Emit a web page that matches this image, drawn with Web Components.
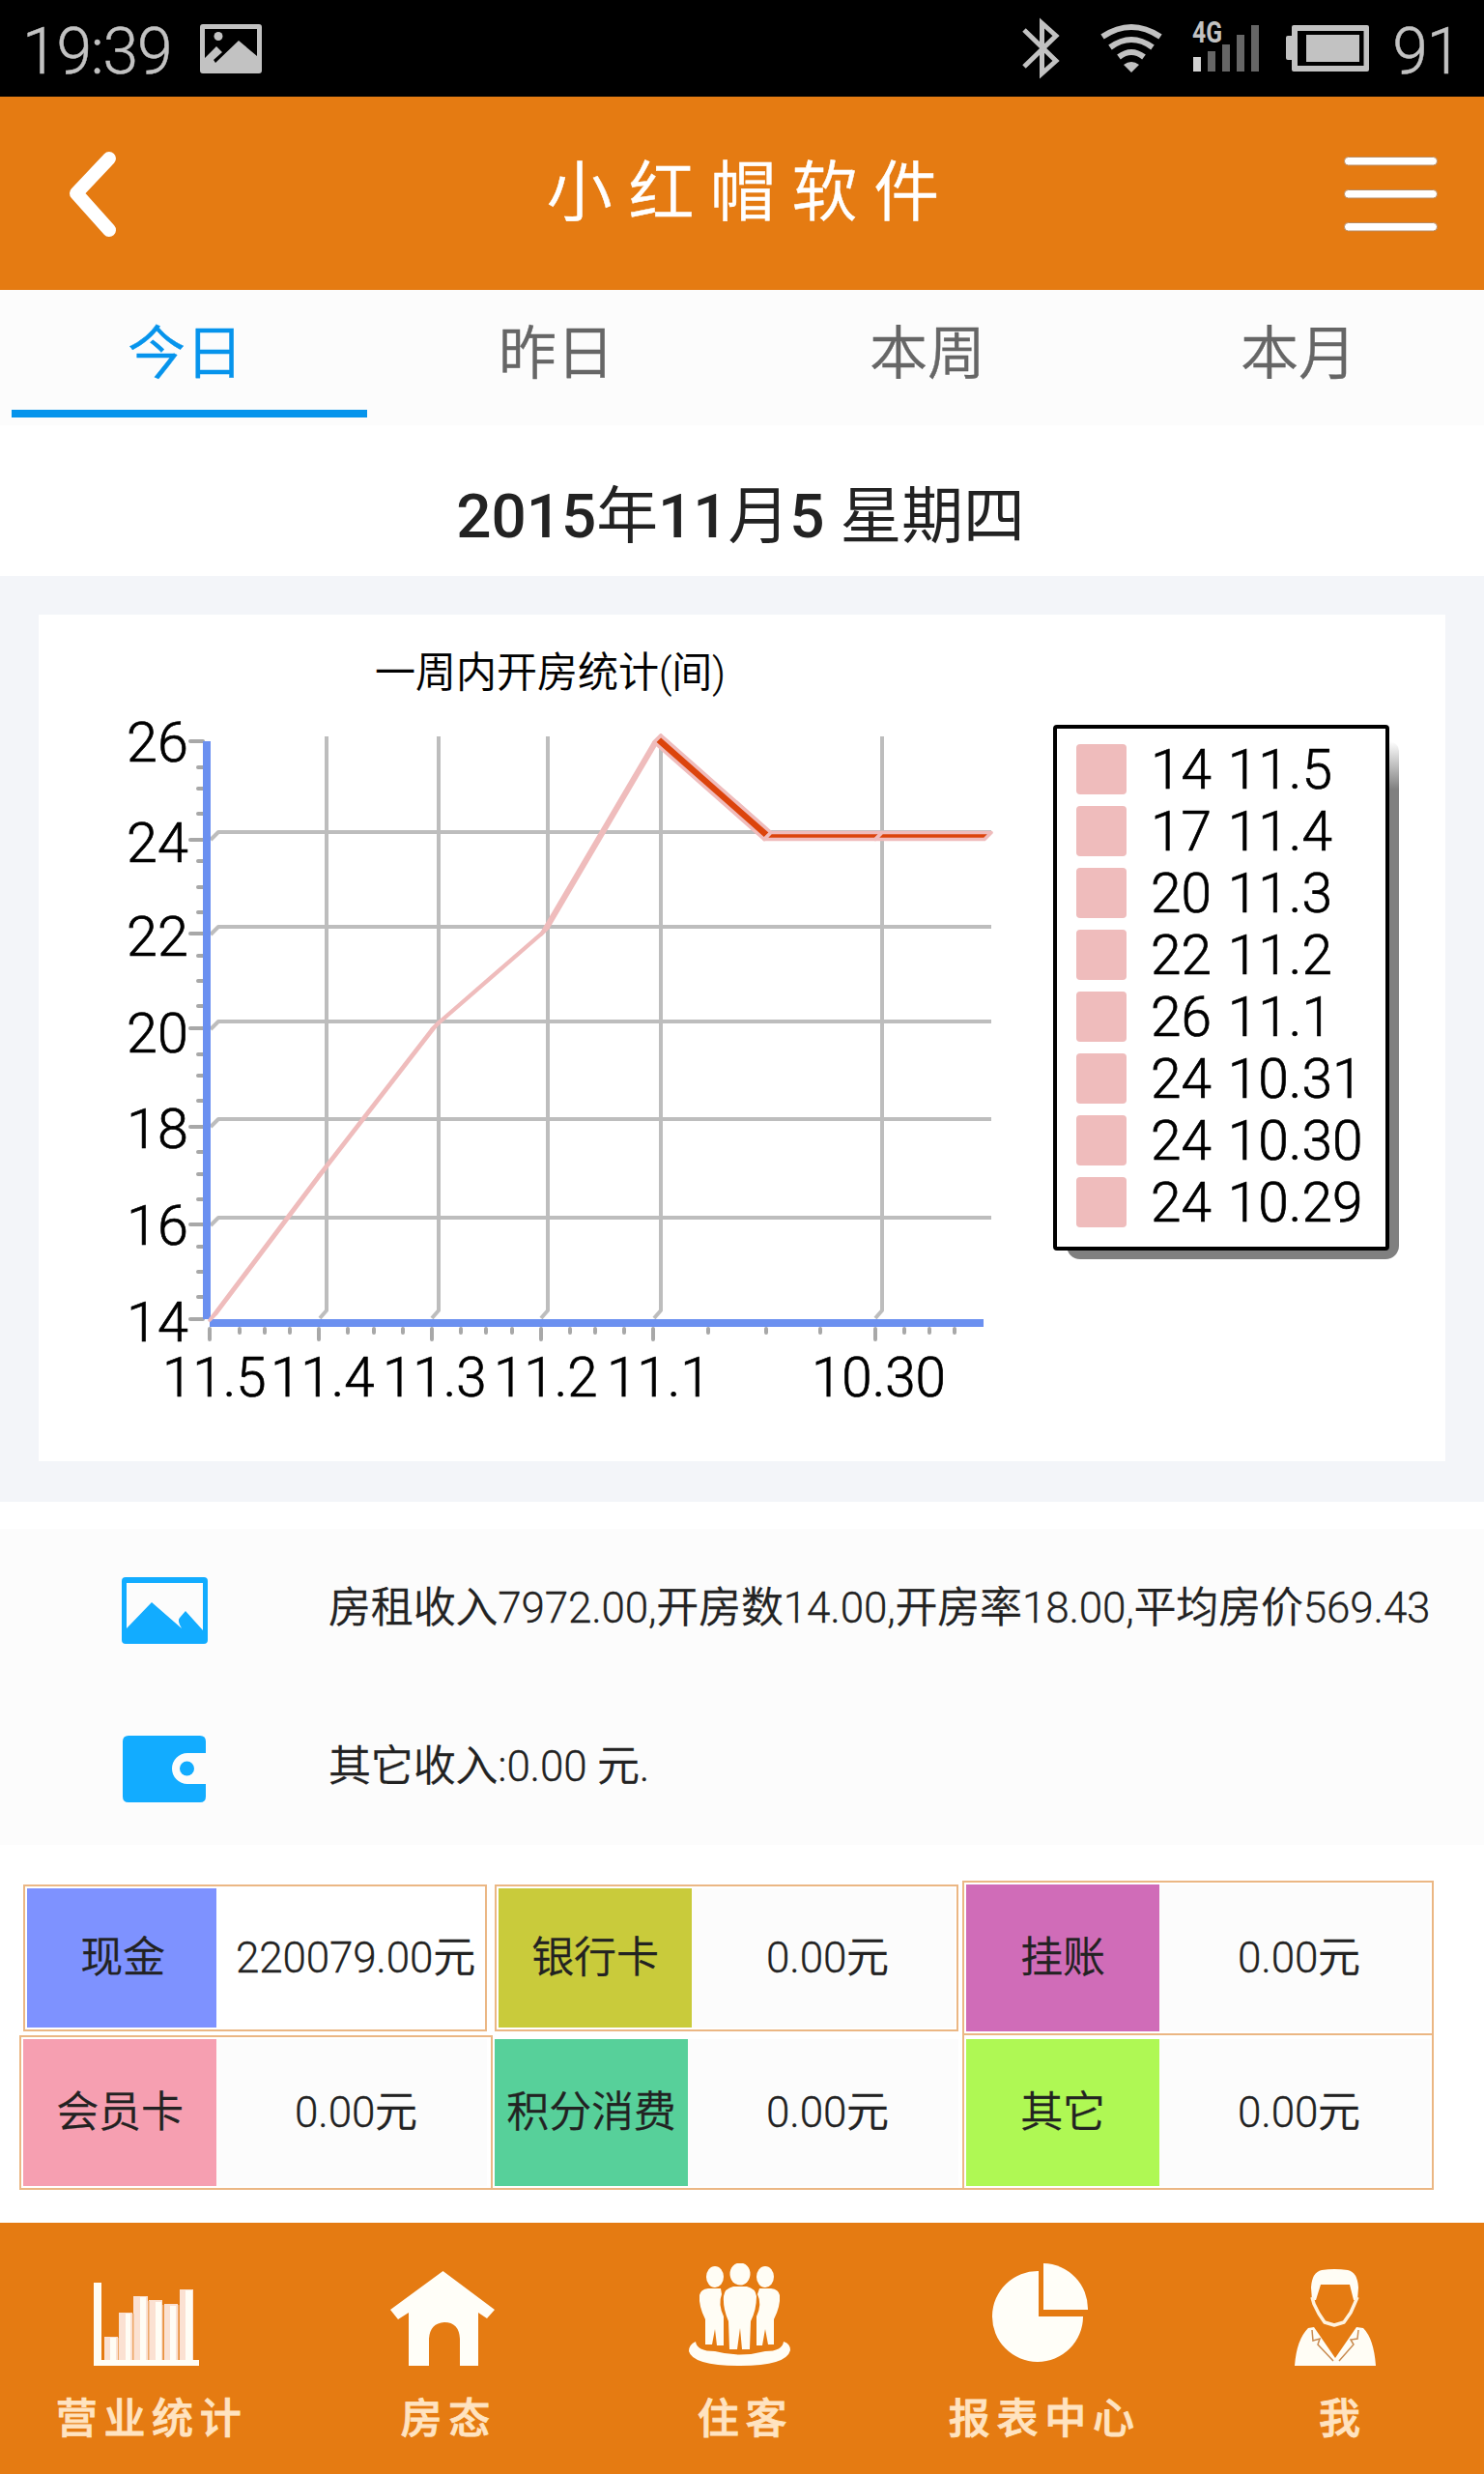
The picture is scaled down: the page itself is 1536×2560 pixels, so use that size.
<!DOCTYPE html>
<html lang="zh-CN">
<head>
<meta charset="utf-8">
<title>小红帽软件</title>
<style>
  html, body {
    margin: 0;
    background: #fff;
  }
  body {
    width: 1536px;
    height: 2560px;
    overflow: hidden;
    color: #222;
    font-family: Roboto, "Noto Sans CJK SC", sans-serif;
    font-weight: 350;
  }
</style>
</head>
<body>
<app-screen>
  <status-bar slot="top" time="19:39" battery="91"></status-bar>
  <app-header slot="top">小 红 帽 软 件</app-header>
  <tab-strip>
    <tab-item active>今日</tab-item>
    <tab-item>昨日</tab-item>
    <tab-item>本周</tab-item>
    <tab-item>本月</tab-item>
  </tab-strip>
  <date-heading date="2015年11月5 星期四"></date-heading>
  <chart-panel>
    <week-chart heading="一周内开房统计(间)"></week-chart>
    <chart-legend items="14 11.5|17 11.4|20 11.3|22 11.2|26 11.1|24 10.31|24 10.30|24 10.29"></chart-legend>
  </chart-panel>
  <info-list>
    <info-row icon="picture">房租收入7972.00,开房数14.00,开房率18.00,平均房价569.43</info-row>
    <info-row icon="wallet">其它收入:0.00 元.</info-row>
  </info-list>
  <pay-grid>
    <pay-cell inset plain label="现金" color="#7e92ff">220079.00元</pay-cell>
    <pay-cell inset label="银行卡" color="#c9cb3b">0.00元</pay-cell>
    <pay-cell label="挂账" color="#d06cb8" edges="2px 2px 2px 2px">0.00元</pay-cell>
    <pay-cell label="会员卡" color="#f69fb1" edges="2px 0 2px 2px">0.00元</pay-cell>
    <pay-cell label="积分消费" color="#57d09a" edges="0 0 2px 2px">0.00元</pay-cell>
    <pay-cell label="其它" color="#aff854" edges="0 2px 2px 2px">0.00元</pay-cell>
  </pay-grid>
  <bottom-nav slot="bottom">
    <nav-item icon="bars">营业统计</nav-item>
    <nav-item icon="house">房态</nav-item>
    <nav-item icon="people">住客</nav-item>
    <nav-item icon="pie">报表中心</nav-item>
    <nav-item icon="person">我</nav-item>
  </bottom-nav>
</app-screen>

<script>
const ICONS = {
  picture: `<svg width="89" height="69" viewBox="0 0 89 69">
    <path fill="#12acff" fill-rule="evenodd" d="M4 0H85Q89 0 89 4V65Q89 69 85 69H4Q0 69 0 65V4Q0 0 4 0ZM5 6V53L31 26L62 53Q57 45 60 42L66 35L84 55V6Z"/></svg>`,
  wallet: `<svg width="89" height="69" viewBox="-1 0 89 69">
    <path fill="#12acff" d="M6 0H80Q86 0 86 6V18H67A16 16 0 0 0 67 50H86V63Q86 69 80 69H6Q0 69 0 63V6Q0 0 6 0Z"/>
    <circle cx="66.500" cy="34" r="7.500" fill="#12acff"/></svg>`,
  bars: `<svg width="109" height="86" viewBox="0 0 109 86">
    <g fill="#fbe1d2"><path d="M11 56h14v25H11zM26 31h14v50H26zM41 14h15v67H41zM57 18h14v63H57zM73 22h14v59H73zM89 7h14v74H89z"/></g>
    <g fill="#fffdf5"><path d="M0 0h8v80h101v6H0zM17 57h6v23h-6zM33 32h5v48h-5zM48 15h6v65h-6zM64 20h6v60h-6zM79 24h6v56h-6zM95 8h7v72h-7z"/></g>
    <path fill="#eda868" d="M25 57h1v23h-1zM40 32h1.500v48H40zM56 19h1.500v61H56zM71 23h1.500v57H71zM87 23h1.500v57H87z"/></svg>`,
  house: `<svg width="108" height="98" viewBox="0 0 108 98">
    <path fill="#fffef8" d="M54.500 0L108 40L100 49L91 43V98H72V70Q71 53 56 53Q41 54 40 70V98H19V43L8 50L0 40Z"/></svg>`,
  people: `<svg width="105" height="106" viewBox="0 0 105 106"><g fill="#fffdf5">
    <ellipse cx="27" cy="14" rx="9" ry="11"/><ellipse cx="79" cy="14" rx="9" ry="11"/><ellipse cx="53" cy="11" rx="10.500" ry="11.500"/>
    <path d="M20 26H33L34 32Q30 42 36 55V85H29L27 68L24 84H17V58Q10 44 11 33Q12 27 20 26Z"/>
    <path d="M85 26H73L71 32Q76 42 70 55V85H76L79 68L82 84H88V58Q95 44 94 33Q93 27 85 26Z"/>
    <path d="M46 24H60Q69 26 70 34Q70 48 64 60L63 89H55L53 67L50 89H42L41 60Q35 46 36 34Q37 26 46 24Z"/>
    <path d="M7 81Q8 91 27 91Q53 98 79 91Q97 91 98 81Q105 83 105 90Q101 106 53 106Q4 106 0 91Q0 84 7 81Z"/></g></svg>`,
  pie: `<svg width="100" height="102" viewBox="0 0 100 102"><g fill="#fffef8">
    <path d="M48 8V55H94A47 47 0 1 1 48 8Z"/><path d="M53 0A47 47 0 0 1 99 48H53Z"/></g></svg>`,
  person: `<svg width="84" height="100" viewBox="0 0 84 100">
    <path fill="#fffdf5" d="M18 32L17 19Q18 3 28 1Q41 -1 55 1Q65 3 66 19L65 32L61 32L57 16H27L22 32Z"/>
    <path fill="none" stroke="#fff3df" stroke-width="3.500" stroke-linejoin="round" d="M18 29L20 36L25 46L31 55L41 58L51 55L58 45L62 36L65 29"/>
    <path fill="#fffdf5" d="M14 61L20 60L42 92L64 60L71 61Q82 72 84 100H0Q2 73 14 61Z"/>
    <path fill="none" stroke="#c98b50" stroke-width="1.500" d="M18 63L19 74L26 72L24 78L40 95M66 63L65 72L58 73L61 78L46 95"/></svg>`
};

class ShadowElement extends HTMLElement {
  connectedCallback() {
    if (this.shadowRoot) return;
    const template = document.createElement("template");
    template.innerHTML = this.template();
    this.attachShadow({mode: "open"}).appendChild(template.content.cloneNode(true));
  }
}

class AppScreen extends ShadowElement {
  template() {
    return `
      <style>
        :host { display: flex; flex-direction: column; width: 1536px; height: 2560px; }
        main { flex: 1; min-height: 0; }
      </style>
      <slot name="top"></slot>
      <main><slot></slot></main>
      <slot name="bottom"></slot>
    `;
  }
}

class StatusBar extends ShadowElement {
  template() {
    return `
      <style>
        :host {
          display: flex;
          align-items: flex-start;
          justify-content: space-between;
          box-sizing: border-box;
          height: 100px;
          padding: 0 24px 0 23px;
          background: #000;
          color: #c2c2c2;
          font-size: 66px;
          font-weight: 300;
          line-height: 108px;
          letter-spacing: -1.2px;
        }
        .side { display: flex; }
        .left { gap: 30px; }
        .right { gap: 23px; }
        span { -webkit-text-stroke: 0.5px #c2c2c2; }
        svg { display: block; height: 100px; }
        text { font: bold 31px Roboto, sans-serif; letter-spacing: 0; }
      </style>
      <div class="side left">
        <span>${this.getAttribute("time")}</span>
        <svg width="64" viewBox="207 0 64 100">
          <path fill="#c2c2c2" fill-rule="evenodd" d="M210 25H268Q271 25 271 28V73Q271 76 268 76H210Q207 76 207 73V28Q207 25 210 25ZM212 30V60L224 48L230 54L221 62L223 65L247 42L266 58V30Z"/>
          <circle cx="226" cy="37.500" r="4.500" fill="#c2c2c2"/>
        </svg>
      </div>
      <div class="side right">
        <svg width="362" viewBox="1055 0 362 100" fill="#c2c2c2">
          <path fill="none" stroke="#c2c2c2" stroke-width="5" d="M1059 31L1092 63L1077.500 76V24L1092 37L1059 69"/>
          <g fill="none" stroke="#c2c2c2" stroke-width="6">
            <path d="M1140 38Q1170 18 1200 38M1148 49Q1170 33 1192 49M1157 59Q1170 49 1183 59"/>
          </g>
          <path d="M1162 67Q1170 61 1178 67L1170 75Z"/>
          <text x="1233" y="44" textLength="31" lengthAdjust="spacingAndGlyphs">4G</text>
          <path fill="#d2d2d2" d="M1234 59h8v15h-8z"/>
          <path fill="#666" d="M1249 53h8v21h-8zM1264 46h8v28h-8zM1279 36h8v38h-8zM1294 26h8v48h-8z"/>
          <path fill-rule="evenodd" d="M1332 37h4V28q0-2 2-2h76q2 0 2 2v44q0 2-2 2h-76q-2 0-2-2V62h-4q-2 0-2-2V39q0-2 2-2zM1342 32v36h68.500V32z"/>
          <path d="M1351 36h55v28h-55z"/>
        </svg>
        <span>${this.getAttribute("battery")}</span>
      </div>
    `;
  }
}

class AppHeader extends ShadowElement {
  template() {
    return `
      <style>
        :host {
          display: grid;
          grid-template-columns: 200px 1fr 200px;
          height: 200px;
          background: #e57b12;
          color: #fff;
          font-size: 68px;
          line-height: 200px;
          text-align: center;
        }
        div { padding-left: 2px; -webkit-text-stroke: 0.5px #fff; }
        svg { display: block; }
      </style>
      <svg width="200" height="200" viewBox="0 0 200 200">
        <path fill="none" stroke="#fff" stroke-width="14" stroke-linejoin="round" stroke-linecap="round" d="M113 64L79 100L113 138"/>
      </svg>
      <div><slot></slot></div>
      <svg width="200" height="200" viewBox="1336 100 200 200">
        <g fill="#fff" stroke="#b98a60" stroke-width="1">
          <rect x="1391.500" y="162.500" width="96" height="8.500" rx="4"/>
          <rect x="1391.500" y="196.500" width="96" height="8.500" rx="4"/>
          <rect x="1391.500" y="230.500" width="96" height="8.500" rx="4"/>
        </g>
      </svg>
    `;
  }
}

class TabStrip extends ShadowElement {
  template() {
    return `
      <style>
        :host {
          display: grid;
          grid-template-columns: repeat(4, 1fr);
          height: 140px;
          background: #fcfcfc;
        }
      </style>
      <slot></slot>
    `;
  }
}

class TabItem extends ShadowElement {
  template() {
    return `
      <style>
        :host {
          display: block;
          box-sizing: border-box;
          height: 132px;
          margin: 0 4px 0 12px;
          padding-right: 8px;
          color: #666;
          font-size: 60px;
          line-height: 133px;
          text-align: center;
          -webkit-text-stroke: 0.4px currentColor;
        }
        :host([active]) {
          border-bottom: 8px solid #0694ec;
          color: #0694ec;
        }
      </style>
      <slot></slot>
    `;
  }
}

class DateHeading extends ShadowElement {
  template() {
    // Digits are set heavier than the Chinese characters around them.
    const text = this.getAttribute("date").replace(/\d+/g, "<b>$&</b>");
    return `
      <style>
        :host {
          display: block;
          height: 156px;
          padding-right: 3px;
          font-size: 63.8px;
          font-weight: 400;
          line-height: 190px;
          text-align: center;
        }
        b { font-weight: 500; }
      </style>
      <div>${text}</div>
    `;
  }
}

class ChartPanel extends ShadowElement {
  template() {
    return `
      <style>
        :host {
          display: block;
          box-sizing: border-box;
          height: 958px;
          padding: 40px;
          background: #f3f5f9;
        }
        div {
          display: flex;
          align-items: flex-start;
          height: 876px;
          background: #fff;
        }
      </style>
      <div><slot></slot></div>
    `;
  }
}

// Front edge of the ribbon; the back edge is shifted by DEPTH.
const POINTS = [[217, 1366], [330, 1216], [447, 1065], [560, 967], [677, 768], [791, 868.5], [906, 868.5], [1019, 868.5]];
const DEPTH = 7;

class WeekChart extends ShadowElement {
  grid() {
    const vertical = [338, 454, 567, 684, 913].map((x) => `M${x} 762V1356l-7 8`);
    const horizontal = [861, 959, 1057, 1158, 1260].map((y) => `M1026 ${y}H226l-8 8`);
    return vertical.concat(horizontal).join("");
  }
  ticks() {
    const yMajor = [767, 869, 966, 1064, 1166, 1267, 1365].map((y) => `M197 ${y}H210`);
    const yMinor = [794, 816, 842, 891, 918, 944, 989, 1015, 1041, 1091, 1113, 1139, 1192, 1215, 1241, 1290, 1316, 1342]
      .map((y) => `M205 ${y}H210`);
    const xMajor = [217, 330, 447, 560, 676, 906].map((x) => `M${x} 1375V1386`);
    const xMinor = [248, 274, 300, 360, 387, 417, 477, 503, 530, 590, 616, 646, 733, 793, 849, 936, 962, 988]
      .map((x) => `M${x} 1375V1379`);
    return [...yMajor, ...yMinor, ...xMajor, ...xMinor].join("");
  }
  ribbon() {
    return POINTS.slice(1).map(([x, y], i) => {
      const [px, py] = POINTS[i];
      return `<path d="M${px} ${py}L${x} ${y}l${DEPTH} ${-DEPTH}L${px + DEPTH} ${py - DEPTH}Z"/>`;
    }).join("");
  }
  labels() {
    const y = [[26, 788], [24, 892], [22, 989], [20, 1089], [18, 1188], [16, 1288], [14, 1388]]
      .map(([v, at]) => `<text x="131" y="${at}">${v}</text>`);
    const x = [["11.5", 168], ["11.4", 280], ["11.3", 396], ["11.2", 511], ["11.1", 628], ["10.30", 840]]
      .map(([v, at]) => `<text class="day" x="${at}" y="1445">${v}</text>`);
    return y.concat(x).join("");
  }
  template() {
    return `
      <style>
        :host { display: block; width: 1050px; height: 876px; }
        svg { display: block; }
        text { fill: #000; stroke: #000; stroke-width: 0.7px; font-size: 57.5px; }
        .day { font-size: 56.5px; }
        .heading { font-size: 43px; stroke-width: 0.2px; }
      </style>
      <svg width="1050" height="876" viewBox="40 636 1050 876">
        <text class="heading" x="388" y="711" textLength="363" lengthAdjust="spacingAndGlyphs">${this.getAttribute("heading")}</text>
        <path fill="none" stroke="#bdbdbd" stroke-width="4" stroke-linejoin="round" d="${this.grid()}"/>
        <path fill="none" stroke="#a8a8a8" stroke-width="4" stroke-linecap="round" d="${this.ticks()}"/>
        <path fill="#6b90f0" d="M210 767h8v598h-8zM217 1365h801v8H217z"/>
        <g fill="#dc440c" stroke="#efbcbc" stroke-width="3.600" stroke-linejoin="round">${this.ribbon()}</g>
        ${this.labels()}
      </svg>
    `;
  }
}

class ChartLegend extends ShadowElement {
  template() {
    const rows = this.getAttribute("items").split("|")
      .map((item) => `<div class="row"><i></i><span>${item}</span></div>`).join("");
    return `
      <style>
        :host { display: block; position: relative; margin-top: 114px; }
        :host::before {
          content: "";
          position: absolute;
          inset: 17px -10px -9px 14px;
          border-radius: 0 10px 14px 14px;
          background: linear-gradient(rgba(128, 128, 128, 0), #808080 50px);
        }
        .box {
          position: relative;
          box-sizing: border-box;
          width: 348px;
          height: 544px;
          padding: 16px 20px;
          border: 4px solid #000;
          border-radius: 4px;
          background: #fff;
        }
        .row {
          display: flex;
          align-items: center;
          height: 52px;
          margin-bottom: 12px;
          color: #000;
          font-size: 56.8px;
          line-height: 56px;
          word-spacing: 3px;
          white-space: nowrap;
          -webkit-text-stroke: 0.7px #000;
        }
        span { padding-top: 2px; }
        i { width: 52px; height: 52px; margin-right: 25px; border-radius: 4px; background: #efbcbc; }
      </style>
      <div class="box">${rows}</div>
    `;
  }
}

class InfoList extends ShadowElement {
  template() {
    return `
      <style>
        :host {
          display: block;
          box-sizing: border-box;
          height: 327px;
          margin-top: 28px;
          background: #fcfcfc;
        }
      </style>
      <slot></slot>
    `;
  }
}

class InfoRow extends ShadowElement {
  template() {
    return `
      <style>
        :host {
          display: grid;
          grid-template-columns: 214px 1fr;
          align-items: center;
          height: 164px;
          padding-left: 126px;
          font-size: 44px;
          line-height: 48px;
          letter-spacing: -0.17px;
          white-space: nowrap;
          -webkit-text-stroke: 0.3px #222;
        }
        svg { display: block; margin-top: 4px; }
      </style>
      ${ICONS[this.getAttribute("icon")]}
      <span><slot></slot></span>
    `;
  }
}

class PayGrid extends ShadowElement {
  template() {
    return `
      <style>
        :host {
          display: grid;
          grid-template-columns: repeat(3, 488px);
          grid-auto-rows: 160px;
          margin: 37px 0 0 20px;
        }
      </style>
      <slot></slot>
    `;
  }
}

class PayCell extends ShadowElement {
  template() {
    return `
      <style>
        :host {
          display: grid;
          grid-template-columns: 200px 1fr;
          box-sizing: border-box;
          padding: 4px 0 4px 4px;
          position: relative;
          background: #fcfcfc;
          box-shadow: inset 0 0 0 4px #fff;
          font-size: 44px;
          letter-spacing: -0.17px;
          -webkit-text-stroke: 0.3px #222;
        }
        :host([inset]) { margin: 4px; }
        :host([plain]) { grid-template-columns: 196px 1fr; background: #fff; }
        .frame {
          position: absolute;
          inset: 0;
          border: 0 solid #ebb784;
          border-width: ${this.getAttribute("edges") || "2px"};
        }
        .label, .value {
          display: flex;
          align-items: center;
          justify-content: center;
          line-height: 48px;
          white-space: nowrap;
        }
        .label { background: ${this.getAttribute("color")}; }
        .value { padding-left: 5px; }
        :host([plain]) .label { padding-left: 2px; width: 194px; }
        :host([plain]) .value { padding-left: 8px; }
      </style>
      <div class="frame"></div>
      <div class="label">${this.getAttribute("label")}</div>
      <div class="value"><slot></slot></div>
    `;
  }
}

class BottomNav extends ShadowElement {
  template() {
    return `
      <style>
        :host {
          display: grid;
          grid-template-columns: repeat(5, 1fr);
          height: 260px;
          background: #e57b12;
        }
      </style>
      <slot></slot>
    `;
  }
}

class NavItem extends ShadowElement {
  template() {
    return `
      <style>
        :host {
          display: flex;
          flex-direction: column;
          align-items: center;
          color: #ffe3c0;
          font-size: 43px;
          font-weight: 500;
          letter-spacing: 6.7px;
          -webkit-text-stroke: 0.8px #ffe3c0;
        }
        .icon {
          display: flex;
          align-items: flex-end;
          box-sizing: border-box;
          height: 148px;
          margin-bottom: 25px;
        }
        span { padding-left: 7px; line-height: 60px; }
        :host([icon="bars"]) .icon, :host([icon="house"]) .icon { margin-right: 5px; }
        :host([icon="people"]) .icon { margin-right: 4px; }
        :host([icon="pie"]) .icon { margin-left: 4px; padding-bottom: 4px; }
        :host([icon="pie"]) span { padding-left: 12px; }
        :host([icon="person"]) span { padding-left: 15px; }
      </style>
      <div class="icon">${ICONS[this.getAttribute("icon")]}</div>
      <span><slot></slot></span>
    `;
  }
}

customElements.define("app-screen", AppScreen);
customElements.define("status-bar", StatusBar);
customElements.define("app-header", AppHeader);
customElements.define("tab-strip", TabStrip);
customElements.define("tab-item", TabItem);
customElements.define("date-heading", DateHeading);
customElements.define("chart-panel", ChartPanel);
customElements.define("week-chart", WeekChart);
customElements.define("chart-legend", ChartLegend);
customElements.define("info-list", InfoList);
customElements.define("info-row", InfoRow);
customElements.define("pay-grid", PayGrid);
customElements.define("pay-cell", PayCell);
customElements.define("bottom-nav", BottomNav);
customElements.define("nav-item", NavItem);
</script>
</body>
</html>
